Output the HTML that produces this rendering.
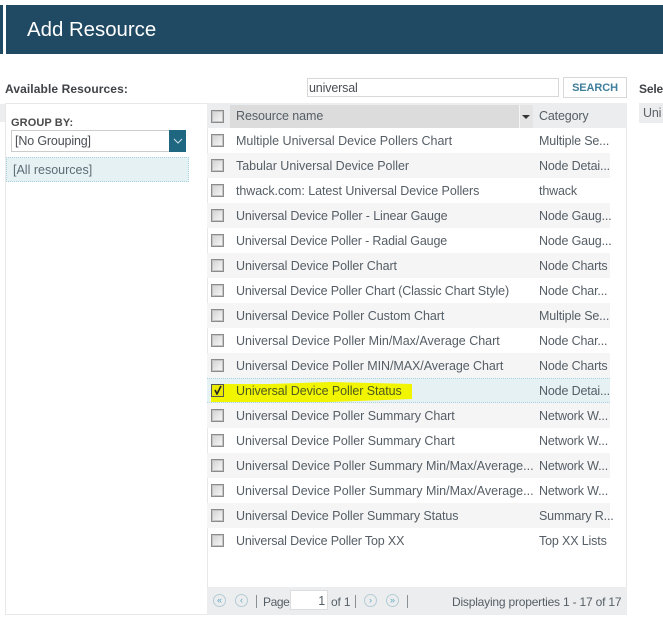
<!DOCTYPE html>
<html><head><meta charset="utf-8"><style>
html,body{margin:0;padding:0;background:#fff}
body{width:663px;height:622px;position:relative;overflow:hidden;font-family:"Liberation Sans",sans-serif;font-size:12.5px;color:#555e66;letter-spacing:-.15px}
div{position:absolute;box-sizing:border-box;white-space:nowrap}
.row{left:207px;width:403px;height:25px}
.g{background:#f5f5f5}
.cb{left:211px;width:13px;height:13px;border:1px solid #8c8c8c;box-shadow:inset 0 0 0 1px #c4c4c4;background:linear-gradient(135deg,#d0d0d0,#fafafa)}
.n{left:236px;line-height:16px;height:16px}
.c{left:539px;line-height:16px;height:16px}
.pg{width:13px;height:13px;border:1px solid #b5ccd6;border-radius:50%;color:#5fa8c4;font-size:9px;line-height:10px;text-align:center;letter-spacing:0;top:594px}
.sep{width:1px;height:13px;background:#8a8f94;top:595px}
</style></head><body>
<div style="left:0;top:5px;width:3px;height:49px;background:#204a63"></div>
<div style="left:6px;top:5px;width:657px;height:49px;background:#204a63"></div>
<div style="left:27px;top:17px;color:#fff;font-size:20.4px;line-height:26px;letter-spacing:0">Add Resource</div>
<div style="left:5px;top:81px;font-weight:bold;font-size:12px;color:#3f4347;line-height:16px;letter-spacing:.1px">Available Resources:</div>
<div style="left:0;top:104px;width:6px;height:18px;background:#ecedee"></div>
<div style="left:5px;top:103px;width:202px;height:512px;border:1px solid #e8e8e8;border-right:0"></div>
<div style="left:11px;top:116px;font-weight:bold;font-size:11px;color:#4a4a4a;line-height:14px;letter-spacing:.1px">GROUP BY:</div>
<div style="left:11px;top:130px;width:159px;height:22px;border:1px solid #ccc;background:#fff;line-height:20px;padding-left:3px;color:#4a4f55">[No Grouping]</div>
<div style="left:169px;top:130px;width:17px;height:22px;background:#1f6680"></div>
<svg style="position:absolute;left:173px;top:138px" width="10" height="6"><path d="M1 1L5 5L9 1" fill="none" stroke="#cfe3ea" stroke-width="1"/></svg>
<div style="left:6px;top:157px;width:183px;height:25px;border:1px dotted #a9d2e0;background:#e6f1f3;line-height:24px;padding-left:6px;color:#5b6b75;letter-spacing:0">[All resources]</div>

<div style="left:307px;top:78px;width:252px;height:19px;border:1px solid #d8d8d8;line-height:18px;padding-left:1px;color:#4a4f55">universal</div>
<div style="left:563px;top:77px;width:64px;height:21px;border:1px solid #d8d8d8;line-height:20px;text-align:center;color:#3f7f9c;font-weight:bold;font-size:11px;letter-spacing:-.1px">SEARCH</div>
<div style="left:639px;top:81px;font-weight:bold;font-size:12px;color:#3f4347;line-height:16px">Sele</div>
<div style="left:639px;top:103px;width:24px;height:20px;background:#ecedee;line-height:20px;padding-left:4px;color:#5b6268">Uni</div>

<div style="left:207px;top:103px;width:420px;height:512px;border-right:1px solid #e8e8e8;border-bottom:1px solid #e8e8e8;border-left:1px solid #e8e8e8"></div>
<div style="left:207px;top:103px;width:420px;height:25px;background:#ecedee"></div>
<div style="left:230px;top:105px;width:303px;height:23px;background:#dcdcdc"></div>
<div style="left:519px;top:105px;width:14px;height:23px;background:#e4e4e4;border-left:1px solid #f5f5f5"></div>
<div style="left:522px;top:115px;width:0;height:0;border-left:4px solid transparent;border-right:4px solid transparent;border-top:4px solid #333"></div>
<div class="cb" style="top:110px"></div>
<div class="n" style="top:108px;letter-spacing:-.08px">Resource name</div>
<div class="c" style="top:108px">Category</div>

<div class="row g" style="top:153px"></div>
<div class="row g" style="top:203px"></div>
<div class="row g" style="top:253px"></div>
<div class="row g" style="top:303px"></div>
<div class="row g" style="top:353px"></div>
<div class="row g" style="top:403px"></div>
<div class="row g" style="top:453px"></div>
<div class="row g" style="top:503px"></div>
<div class="row" style="top:378px;background:#e6f1f3;border-top:1px dotted #a9d2e0;border-bottom:1px dotted #a9d2e0"></div>
<svg style="position:absolute;left:210px;top:381px" width="205" height="24"><path d="M1 3L60 3L120 1L202 3L202 18L120 21L60 21L1 21Z" fill="#f2f500"/></svg>

<div class="cb" style="top:134px"></div><div class="n" style="top:133px;letter-spacing:0">Multiple Universal Device Pollers Chart</div><div class="c" style="top:133px">Multiple Se...</div>
<div class="cb" style="top:159px"></div><div class="n" style="top:158px;letter-spacing:-.02px">Tabular Universal Device Poller</div><div class="c" style="top:158px">Node Detai...</div>
<div class="cb" style="top:184px"></div><div class="n" style="top:183px;letter-spacing:-.06px">thwack.com: Latest Universal Device Pollers</div><div class="c" style="top:183px">thwack</div>
<div class="cb" style="top:209px"></div><div class="n" style="top:208px;letter-spacing:-.12px">Universal Device Poller - Linear Gauge</div><div class="c" style="top:208px">Node Gaug...</div>
<div class="cb" style="top:234px"></div><div class="n" style="top:233px">Universal Device Poller - Radial Gauge</div><div class="c" style="top:233px">Node Gaug...</div>
<div class="cb" style="top:259px"></div><div class="n" style="top:258px;letter-spacing:-.08px">Universal Device Poller Chart</div><div class="c" style="top:258px">Node Charts</div>
<div class="cb" style="top:284px"></div><div class="n" style="top:283px">Universal Device Poller Chart (Classic Chart Style)</div><div class="c" style="top:283px">Node Char...</div>
<div class="cb" style="top:309px"></div><div class="n" style="top:308px;letter-spacing:-.04px">Universal Device Poller Custom Chart</div><div class="c" style="top:308px">Multiple Se...</div>
<div class="cb" style="top:334px"></div><div class="n" style="top:333px;letter-spacing:0">Universal Device Poller Min/Max/Average Chart</div><div class="c" style="top:333px">Node Char...</div>
<div class="cb" style="top:359px"></div><div class="n" style="top:358px;letter-spacing:-.06px">Universal Device Poller MIN/MAX/Average Chart</div><div class="c" style="top:358px">Node Charts</div>
<div class="cb" style="top:384px;background:#e8e800;border-color:#555;box-shadow:none"></div>
<svg style="position:absolute;left:213px;top:385px" width="10" height="10"><path d="M2 5L4 9L8 1" fill="none" stroke="#222" stroke-width="1.6"/></svg>
<div class="n" style="top:383px;color:#4d5a20;letter-spacing:-.08px">Universal Device Poller Status</div><div class="c" style="top:383px">Node Detai...</div>
<div class="cb" style="top:409px"></div><div class="n" style="top:408px;letter-spacing:-.04px">Universal Device Poller Summary Chart</div><div class="c" style="top:408px">Network W...</div>
<div class="cb" style="top:434px"></div><div class="n" style="top:433px;letter-spacing:-.04px">Universal Device Poller Summary Chart</div><div class="c" style="top:433px">Network W...</div>
<div class="cb" style="top:459px"></div><div class="n" style="top:458px;letter-spacing:.01px">Universal Device Poller Summary Min/Max/Average...</div><div class="c" style="top:458px">Network W...</div>
<div class="cb" style="top:484px"></div><div class="n" style="top:483px;letter-spacing:.01px">Universal Device Poller Summary Min/Max/Average...</div><div class="c" style="top:483px">Network W...</div>
<div class="cb" style="top:509px"></div><div class="n" style="top:508px;letter-spacing:-.07px">Universal Device Poller Summary Status</div><div class="c" style="top:508px">Summary R...</div>
<div class="cb" style="top:534px"></div><div class="n" style="top:533px">Universal Device Poller Top XX</div><div class="c" style="top:533px">Top XX Lists</div>

<div style="left:207px;top:587px;width:420px;height:28px;background:#ecedee"></div>
<div class="pg" style="left:213px">«</div>
<div class="pg" style="left:235px">‹</div>
<div class="sep" style="left:256px"></div>
<div style="left:263px;top:594px;line-height:16px;font-size:12px;letter-spacing:-.4px">Page</div>
<div style="left:290px;top:590px;width:38px;height:20px;background:#fff;border:1px solid #ddd;line-height:20px;text-align:right;padding-right:2px">1</div>
<div style="left:331px;top:594px;line-height:16px;font-size:12px">of 1</div>
<div class="sep" style="left:355px"></div>
<div class="pg" style="left:364px">›</div>
<div class="pg" style="left:386px">»</div>
<div class="sep" style="left:407px"></div>
<div style="left:452px;top:594px;line-height:16px;font-size:12px;letter-spacing:-.2px">Displaying properties 1 - 17 of 17</div>
</body></html>
